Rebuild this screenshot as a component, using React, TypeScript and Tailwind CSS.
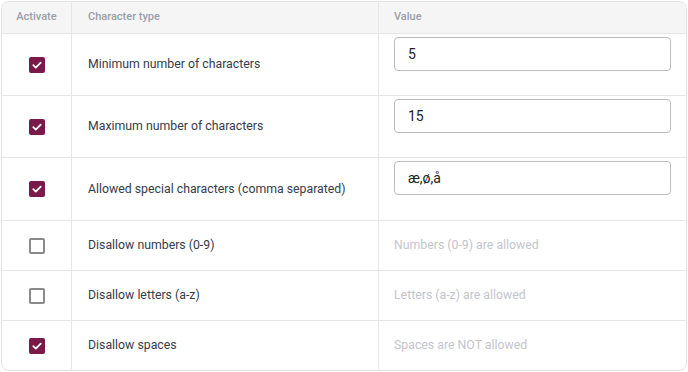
import { useState } from "react";

type Row = {
  label: string;
  checked: boolean;
  input?: string;
  note?: string;
};

const rows: Row[] = [
  { label: "Minimum number of characters", checked: true, input: "5" },
  { label: "Maximum number of characters", checked: true, input: "15" },
  { label: "Allowed special characters (comma separated)", checked: true, input: "æ,ø,å" },
  { label: "Disallow numbers (0-9)", checked: false, note: "Numbers (0-9) are allowed" },
  { label: "Disallow letters (a-z)", checked: false, note: "Letters (a-z) are allowed" },
  { label: "Disallow spaces", checked: true, note: "Spaces are NOT allowed" },
];

function Checkbox({ checked, onToggle }: { checked: boolean; onToggle: () => void }) {
  return (
    <button
      onClick={onToggle}
      className={
        checked
          ? "w-4 h-4 rounded-[2px] bg-[#7a1a4a] flex items-center justify-center"
          : "w-4 h-4 rounded-[2px] border-2 border-[#8a8a8a] bg-white"
      }
    >
      {checked && (
        <svg width="12" height="12" viewBox="0 0 12 12" fill="none">
          <path d="M2.3 6.2l2.5 2.4 4.9-5" stroke="white" strokeWidth="1.8" strokeLinecap="round" strokeLinejoin="round" />
        </svg>
      )}
    </button>
  );
}

export default function App() {
  const [state, setState] = useState(rows);

  const toggle = (i: number) =>
    setState((s) => s.map((r, j) => (j === i ? { ...r, checked: !r.checked } : r)));

  return (
    <div className="p-px bg-white font-['Roboto',sans-serif]">
      <div className="border border-[#e3e3e3] rounded-lg overflow-hidden bg-white">
        {/* Header */}
        <div className="grid grid-cols-[70px_1fr_1fr] h-[31px] bg-[#f5f5f5] text-[11px] font-medium text-[#9a9ea8]">
          <div className="flex items-center justify-center border-r border-[#e6e6e6]">Activate</div>
          <div className="flex items-center px-4 border-r border-[#e6e6e6]">Character type</div>
          <div className="flex items-center px-[15px]">Value</div>
        </div>

        {state.map((row, i) => (
          <div
            key={row.label}
            className={`grid grid-cols-[70px_1fr_1fr] border-t border-[#e6e6e6] text-[12.3px] text-[#363b48] ${
              row.input !== undefined ? (i === 2 ? "h-[63px]" : "h-[62px]") : "h-[50px]"
            }`}
          >
            <div className="flex items-center justify-center border-r border-[#e6e6e6]">
              <Checkbox checked={row.checked} onToggle={() => toggle(i)} />
            </div>
            <div className="flex items-center px-4 border-r border-[#e6e6e6]">{row.label}</div>
            {row.input !== undefined ? (
              <div className="px-[15px] pt-[3px]">
                <input
                  defaultValue={row.input}
                  className="w-full h-[34px] border border-[#bcbcbc] rounded px-[13px] text-[14px] text-[#222] outline-none"
                />
              </div>
            ) : (
              <div className="flex items-center px-[15px] text-[#c3c5cc]">{row.note}</div>
            )}
          </div>
        ))}
      </div>
    </div>
  );
}
